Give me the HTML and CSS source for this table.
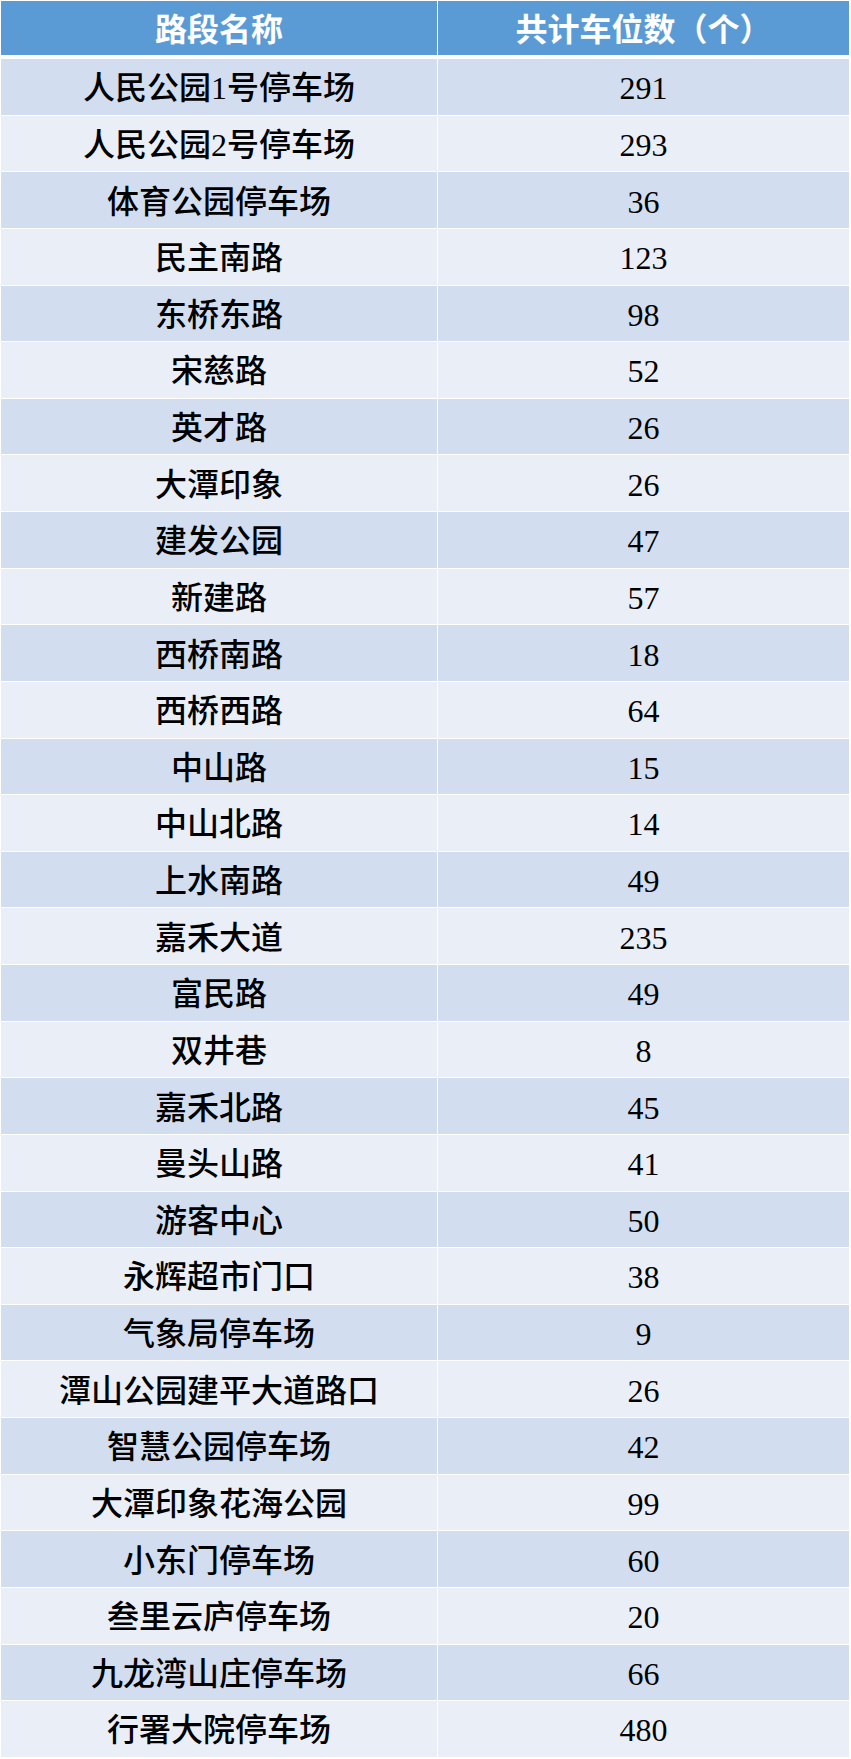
FILE: index.html
```html
<!DOCTYPE html>
<html lang="zh-CN">
<head>
<meta charset="utf-8">
<title>路段车位</title>
<link rel="stylesheet" href="styles.css">
</head>
<body>
<div class="table">
  <div class="head">
    <div class="cell">路段名称</div>
    <div class="cell">共计车位数（个）</div>
  </div>
  <div class="body">
    <div class="cell">人民公园1号停车场</div><div class="cell">291</div>
    <div class="cell">人民公园2号停车场</div><div class="cell">293</div>
    <div class="cell">体育公园停车场</div><div class="cell">36</div>
    <div class="cell">民主南路</div><div class="cell">123</div>
    <div class="cell">东桥东路</div><div class="cell">98</div>
    <div class="cell">宋慈路</div><div class="cell">52</div>
    <div class="cell">英才路</div><div class="cell">26</div>
    <div class="cell">大潭印象</div><div class="cell">26</div>
    <div class="cell">建发公园</div><div class="cell">47</div>
    <div class="cell">新建路</div><div class="cell">57</div>
    <div class="cell">西桥南路</div><div class="cell">18</div>
    <div class="cell">西桥西路</div><div class="cell">64</div>
    <div class="cell">中山路</div><div class="cell">15</div>
    <div class="cell">中山北路</div><div class="cell">14</div>
    <div class="cell">上水南路</div><div class="cell">49</div>
    <div class="cell">嘉禾大道</div><div class="cell">235</div>
    <div class="cell">富民路</div><div class="cell">49</div>
    <div class="cell">双井巷</div><div class="cell">8</div>
    <div class="cell">嘉禾北路</div><div class="cell">45</div>
    <div class="cell">曼头山路</div><div class="cell">41</div>
    <div class="cell">游客中心</div><div class="cell">50</div>
    <div class="cell">永辉超市门口</div><div class="cell">38</div>
    <div class="cell">气象局停车场</div><div class="cell">9</div>
    <div class="cell">潭山公园建平大道路口</div><div class="cell">26</div>
    <div class="cell">智慧公园停车场</div><div class="cell">42</div>
    <div class="cell">大潭印象花海公园</div><div class="cell">99</div>
    <div class="cell">小东门停车场</div><div class="cell">60</div>
    <div class="cell">叁里云庐停车场</div><div class="cell">20</div>
    <div class="cell">九龙湾山庄停车场</div><div class="cell">66</div>
    <div class="cell">行署大院停车场</div><div class="cell">480</div>
  </div>
</div>
</body>
</html>
```

FILE: styles.css
```css
html, body {
  margin: 0;
  padding: 0;
  background: #ffffff;
}

.table {
  padding: 1px 0 0 1px;
  width: 848px;
  font-family: "Liberation Serif", "Noto Sans CJK SC", serif;
}

.head,
.body {
  display: grid;
  grid-template-columns: 436px 411px;
  column-gap: 1px;
}

.head {
  height: 54px;
  margin-bottom: 4px;
}

.head .cell {
  background: #5b9bd5;
  color: #ffffff;
  font-weight: 700;
}

.body {
  row-gap: 1px;
  grid-auto-rows: 55.63px;
}

.cell {
  display: flex;
  align-items: center;
  justify-content: center;
  font-size: 32px;
  line-height: 1;
  color: #000000;
  white-space: nowrap;
  padding-top: 3px;
  box-sizing: border-box;
}

.body .cell {
  background: #eaeff7;
  font-weight: 500;
}

.body .cell:nth-child(4n+1),
.body .cell:nth-child(4n+2) {
  background: #d2deef;
}
```
